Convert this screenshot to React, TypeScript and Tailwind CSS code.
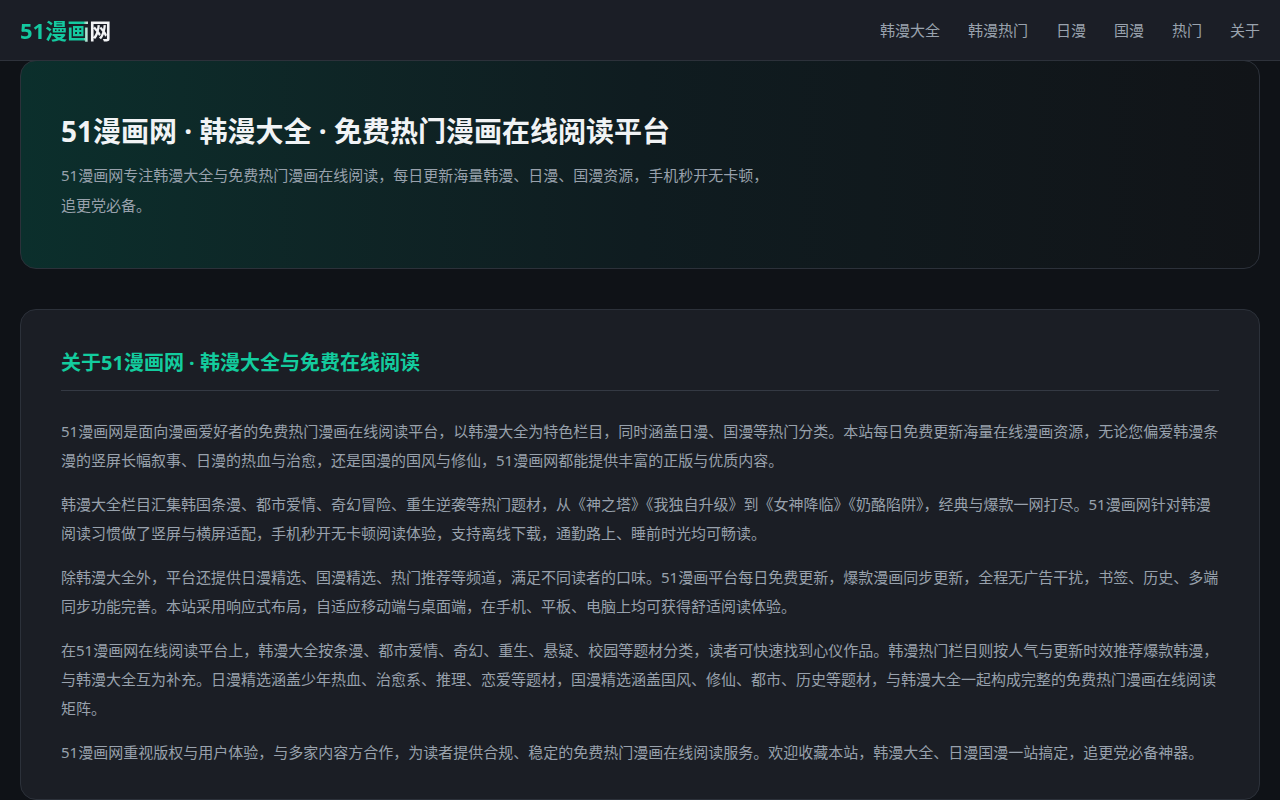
export default function App() {
  const f = { fontFamily: '"Noto Sans", "Noto Sans CJK SC", sans-serif' };
  const nav = ["韩漫大全", "韩漫热门", "日漫", "国漫", "热门", "关于"];
  const paras = [
    "51漫画网是面向漫画爱好者的免费热门漫画在线阅读平台，以韩漫大全为特色栏目，同时涵盖日漫、国漫等热门分类。本站每日免费更新海量在线漫画资源，无论您偏爱韩漫条漫的竖屏长幅叙事、日漫的热血与治愈，还是国漫的国风与修仙，51漫画网都能提供丰富的正版与优质内容。",
    "韩漫大全栏目汇集韩国条漫、都市爱情、奇幻冒险、重生逆袭等热门题材，从《神之塔》《我独自升级》到《女神降临》《奶酪陷阱》，经典与爆款一网打尽。51漫画网针对韩漫阅读习惯做了竖屏与横屏适配，手机秒开无卡顿阅读体验，支持离线下载，通勤路上、睡前时光均可畅读。",
    "除韩漫大全外，平台还提供日漫精选、国漫精选、热门推荐等频道，满足不同读者的口味。51漫画平台每日免费更新，爆款漫画同步更新，全程无广告干扰，书签、历史、多端同步功能完善。本站采用响应式布局，自适应移动端与桌面端，在手机、平板、电脑上均可获得舒适阅读体验。",
    "在51漫画网在线阅读平台上，韩漫大全按条漫、都市爱情、奇幻、重生、悬疑、校园等题材分类，读者可快速找到心仪作品。韩漫热门栏目则按人气与更新时效推荐爆款韩漫，与韩漫大全互为补充。日漫精选涵盖少年热血、治愈系、推理、恋爱等题材，国漫精选涵盖国风、修仙、都市、历史等题材，与韩漫大全一起构成完整的免费热门漫画在线阅读矩阵。",
    "51漫画网重视版权与用户体验，与多家内容方合作，为读者提供合规、稳定的免费热门漫画在线阅读服务。欢迎收藏本站，韩漫大全、日漫国漫一站搞定，追更党必备神器。",
  ];
  return (
    <div style={f} className="min-h-screen bg-[#0f1217] text-gray-200">
      <header className="h-[61px] bg-[#1b1e26] border-b border-[#2e323b] flex items-center justify-between px-5">
        <div className="text-[22px] font-bold bg-gradient-to-r from-[#14c9a0] from-70% to-[#f3f4f6] to-75% bg-clip-text text-transparent">51漫画网</div>
        <nav className="flex gap-7 text-[15px] text-[#9aa3ae]">
          {nav.map((n) => (<span key={n}>{n}</span>))}
        </nav>
      </header>
      <main className="px-5">
        <section className="h-[209px] -mt-px rounded-[16px] border border-[#2c313a] bg-gradient-to-r from-[#0b2f2c] via-[#0f1c20] to-[#111418] px-10 pt-[50px]">
          <h1 className="text-[28px] font-bold text-[#f1f3f5] leading-[40px]">51漫画网 · 韩漫大全 · 免费热门漫画在线阅读平台</h1>
          <p className="mt-[9px] max-w-[712px] text-[15px] leading-[30px] text-[#98a1ac]">51漫画网专注韩漫大全与免费热门漫画在线阅读，每日更新海量韩漫、日漫、国漫资源，手机秒开无卡顿，追更党必备。</p>
        </section>
        <section className="mt-10 rounded-[16px] border border-[#2c313a] bg-[#1b1e25] px-10 pt-[38px] pb-8">
          <h2 className="text-[20px] font-bold text-[#13cc9e] leading-[30px] pb-[12px] border-b border-[#343943]">关于51漫画网 · 韩漫大全与免费在线阅读</h2>
          <div className="mt-[26px] flex flex-col gap-[15px]">
            {paras.map((p, i) => (<p key={i} className="text-[15px] leading-[29px] text-[#98a1ac]">{p}</p>))}
          </div>
        </section>
      </main>
    </div>
  );
}
